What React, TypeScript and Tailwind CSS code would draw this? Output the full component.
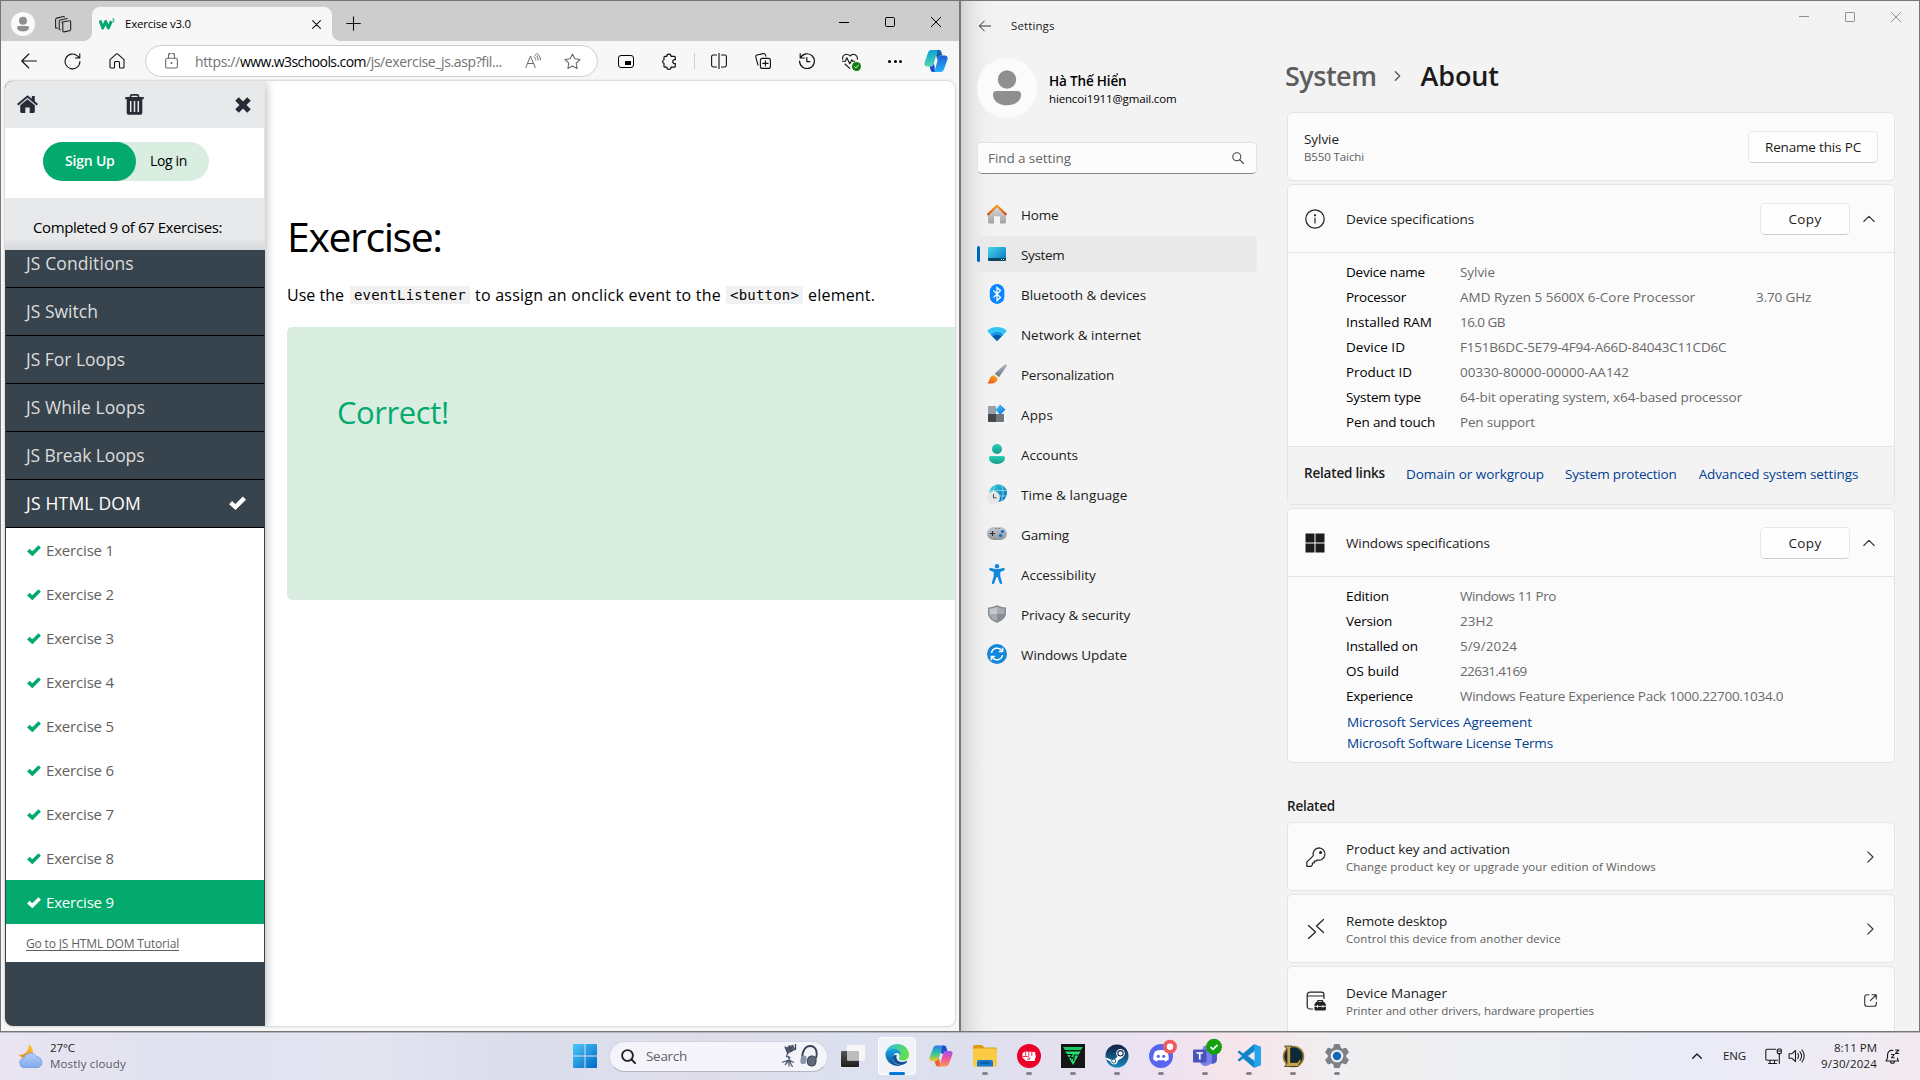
import type { ReactNode } from "react";

type IconProps = { className?: string; children: ReactNode; box?: number; sw?: number };

function Line({ className = "", children, box = 20, sw = 1.2 }: IconProps) {
  return (
    <svg
      viewBox={`0 0 ${box} ${box}`}
      className={`shrink-0 ${className}`}
      fill="none"
      stroke="currentColor"
      strokeWidth={sw}
      strokeLinecap="round"
      strokeLinejoin="round"
    >
      {children}
    </svg>
  );
}

function Grad({ id, from, to, x2 = 0, y2 = 1 }: { id: string; from: string; to: string; x2?: number; y2?: number }) {
  return (
    <linearGradient id={id} x1="0" y1="0" x2={x2} y2={y2}>
      <stop offset="0" stopColor={from} />
      <stop offset="1" stopColor={to} />
    </linearGradient>
  );
}

function Check({ className = "" }: { className?: string }) {
  return (
    <svg viewBox="0 0 14 11" className={`shrink-0 ${className}`} fill="none" stroke="currentColor" strokeWidth="3.6">
      <path d="M1.3 5.2 L5.3 8.800 L12.700 1.500" />
    </svg>
  );
}

/* ---------- Browser window ---------- */

function TabStrip() {
  return (
    <div className="flex h-[40px] items-end bg-[#cdcdcd] pl-[10px]">
      <div className="mb-[5px] h-6 w-6 shrink-0">
        <svg viewBox="0 0 24 24" className="h-6 w-6">
          <circle cx="12" cy="12" r="12" fill="#fafafa" />
          <circle cx="12" cy="8.8" r="4" fill="#8f8f8f" />
          <path d="M6 15.5q0-1.6 1.6-1.6h8.8q1.6 0 1.6 1.6c0 2.6-2.8 3.9-6 3.9s-6-1.300-6-3.900z" fill="#8f8f8f" />
        </svg>
      </div>
      <Line className="mb-[8px] ml-[19px] h-[18px] w-[18px] text-[#222]" box={18} sw={1.1}>
        <path d="M8 7l7.500-1.300a1 1 0 0 1 1.200 1v7.600a1.400 1.400 0 0 1-1.100 1.400l-5.600 1.200a1 1 0 0 1-1.200-1V8.300A1.400 1.400 0 0 1 8 7z" />
        <path d="M6.300 14.800a1 1 0 0 1-1.100-1V6.300A1.400 1.400 0 0 1 6.300 5l6.900-1.500M3.300 13a1 1 0 0 1-1.700-.8V4.500a1.600 1.600 0 0 1 1.200-1.400L9.500 1.500a1 1 0 0 1 1 .5" />
      </Line>
      <div className="relative ml-[20px] flex h-[34px] w-[240px] items-center rounded-t-lg bg-[#f7f7f7] pl-[7px]">
        <div className="absolute -left-2 bottom-0 h-2 w-2 bg-[radial-gradient(circle_at_0_0,#cdcdcd_7.5px,#f7f7f7_8px)]" />
        <div className="absolute -right-2 bottom-0 h-2 w-2 bg-[radial-gradient(circle_at_100%_0,#cdcdcd_7.500px,#f7f7f7_8px)]" />
        <svg viewBox="0 0 16 12" className="h-3 w-4 shrink-0" fill="none" stroke="#04aa6d">
          <path d="M1 2.500L3.800 10 6.600 3.500 9.400 10 12.300 3.200" strokeWidth="3" strokeLinejoin="round" />
          <path d="M13.300 1h1.800l-.9 1.300c1.300 0 1.300 2-.9 1.600" strokeWidth=".9" />
        </svg>
        <span className="ml-[10px] text-[11.5px] tracking-[-0.22px] text-black">Exercise v3.0</span>
        <Line className="ml-auto mr-[11px] h-[9px] w-[9px] text-[#111]" box={9} sw={1.1}>
          <path d="M.6.6l7.800 7.800M8.400.6L.6 8.400" />
        </Line>
      </div>
      <Line className="mb-[10px] ml-[14px] h-[15px] w-[15px] text-[#111]" box={15} sw={1.1}>
        <path d="M7.500.7v13.600M.7 7.500h13.600" />
      </Line>
      <div className="mb-[14px] ml-auto mr-[18px] flex items-center gap-[36px] text-black">
        <Line className="h-[10px] w-[10px]" box={10} sw={1}>
          <path d="M0 5.500h10" />
        </Line>
        <Line className="h-[10px] w-[10px]" box={10} sw={1}>
          <rect x=".5" y=".5" width="9" height="9" rx="1" />
        </Line>
        <Line className="h-[10px] w-[10px]" box={10} sw={1}>
          <path d="M.3.3l9.400 9.400M9.700.3L.3 9.700" />
        </Line>
      </div>
    </div>
  );
}

function CopilotEdge() {
  return (
    <svg viewBox="0 0 24 24" className="h-6 w-6 shrink-0">
      <defs>
        <Grad id="ce1" from="#0fa0d8" to="#4fd6b0" x2={0} />
        <Grad id="ce2" from="#1f5bd8" to="#23b3f5" x2={0} />
      </defs>
      <path d="M13.500 1h-6C5.500 1 4.500 2 3.900 4L.6 13.500c-.8 2.300.6 4 2.500 4h3.400c1.900 0 2.800-1 3.400-3L12.500 5c.6-1.900 1.300-2.700 3-2.700h1.800C16.800 1.400 15.900 1 13.500 1z" fill="url(#ce1)" />
      <path d="M10.500 23h6c2 0 3-1 3.600-3l3.300-9.500c.8-2.300-.6-4-2.500-4h-3.400c-1.900 0-2.800 1-3.400 3L11.500 19c-.6 1.900-1.300 2.700-3 2.700H6.700c.5.9 1.400 1.300 3.800 1.300z" fill="url(#ce2)" />
      <path d="M13.500 1c2.700 0 3.500.8 4 2.500l.9 3h-.9c-1.900 0-2.800 1-3.400 3l-.6 1.500-1.400-4.500z" fill="#1565a8" />
      <path d="M10.500 23c-2.700 0-3.500-.8-4-2.500l-.9-3h.9c1.900 0 2.800-1 3.400-3l.8 4z" fill="#1b49d0" />
    </svg>
  );
}

function Toolbar() {
  return (
    <div className="flex h-[40px] items-center pl-[20px] text-[#111]">
      <Line className="h-4 w-4" box={16} sw={1.1}>
        <path d="M15.500 8H.8M7.800 1L.8 8l7 7" />
      </Line>
      <Line className="ml-[27px] h-[17px] w-[17px]" box={17} sw={1.1}>
        <path d="M15.900 8.500a7.400 7.400 0 1 1-2.300-5.400l2 1.900M15.800.8V5h-4.400" />
      </Line>
      <Line className="ml-[28px] h-[16px] w-[16px]" box={16} sw={1.1}>
        <path d="M1 6.600L7.200 1.200a1.200 1.200 0 0 1 1.600 0L15 6.600V14a1 1 0 0 1-1 1h-2.500a1 1 0 0 1-1-1v-4.500a1 1 0 0 0-1-1h-3a1 1 0 0 0-1 1V14a1 1 0 0 1-1 1H2a1 1 0 0 1-1-1z" />
      </Line>
      <div className="ml-[20px] flex h-8 w-[453px] shrink-0 items-center rounded-full border border-[#cfcfcf] bg-white pl-[19px] text-[#6b6b6b]">
        <Line className="h-4 w-[13px]" box={13} sw={1.1}>
          <rect x=".6" y="3.800" width="11.800" height="9.700" rx="1.600" />
          <path d="M3.500 3.600V1.500a3 3 0 0 1 6 0v2.100M3.500 1a3 3 0 0 1 6 0" />
          <circle cx="6.500" cy="8.600" r=".5" fill="currentColor" />
        </Line>
        <div className="ml-[17px] flex whitespace-pre text-[14px] text-[#727272]">
          <span className="tracking-[-0.36px]">https://</span>
          <span className="tracking-[-0.58px] text-black">www.w3schools.com</span>
          <span className="tracking-[-0.38px]">/js/exercise_js.asp?fil...</span>
        </div>
        <Line className="ml-[23px] h-4 w-4" box={16} sw={1}>
          <path d="M.8 14.500L5.500 3l4.700 11.500M2.500 10.500h6M9 3.800c1.200.8 1.700 1.900 1.800 3.200M10 1.600c2 1.200 3 3 3.100 5.400M11.300-.2c2.600 1.700 4.200 4.200 4.200 7.200" />
        </Line>
        <Line className="ml-[23px] h-[17px] w-[17px]" box={17} sw={1.1}>
          <path d="M8.500 1l2.300 4.800 5.200.7-3.800 3.700.9 5.300-4.600-2.500-4.600 2.500.9-5.300L1 6.500l5.200-.7z" />
        </Line>
      </div>
      <div className="ml-[20px] flex h-[13px] w-4 shrink-0 items-end justify-end rounded-[3px] border-[1.5px] border-black p-[2px]">
        <div className="h-[4px] w-[6px] bg-black" />
      </div>
      <Line className="ml-[27px] h-[17px] w-[17px]" box={17} sw={1.2}>
        <path d="M5.800 3.300a2.100 2.100 0 0 1 4.200 0h3.300a1 1 0 0 1 1 1v2.400a2 2 0 1 0 0 3.800v2.700a1 1 0 0 1-1 1H10a2.100 2.100 0 0 1-4.200 0H4a1 1 0 0 1-1-1v-2.700a2 2 0 0 1 0-3.800V4.300a1 1 0 0 1 1-1z" />
      </Line>
      <div className="ml-[16px] h-4 w-px shrink-0 bg-[#cfcfcf]" />
      <Line className="ml-[16px] h-4 w-4" box={16} sw={1.1}>
        <path d="M8 0v16M5.500 2H2.200A1.700 1.700 0 0 0 .6 3.700v8.600A1.700 1.700 0 0 0 2.200 14h3.300M10.500 2h3.300a1.700 1.700 0 0 1 1.600 1.700v8.600a1.700 1.700 0 0 1-1.600 1.700h-3.300" />
      </Line>
      <Line className="ml-[28px] h-4 w-4" box={16} sw={1.1}>
        <rect x="5.400" y="5.400" width="10" height="10" rx="2" />
        <path d="M10.400 7.800v5.200M7.800 10.400H13M3 12L.8 4.200A1.900 1.900 0 0 1 2 2L8.200.6c1.100-.2 2 .4 2.300 1.500l.3 1.100" />
      </Line>
      <Line className="ml-[28px] h-4 w-4" box={16} sw={1.2}>
        <path d="M1.400 4.800A7.400 7.400 0 1 1 .6 8M1.200.8v4.200h4.200M7.800 4.500v4.200h3" />
      </Line>
      <div className="relative ml-[27px] h-4 w-[19px] shrink-0">
        <Line className="h-4 w-4" box={16} sw={1.100}>
          <path d="M.7 6.200C0 2.600 4-.5 7.800 2.700l.2.300C11.500-.7 16 2 15.300 6.300M.3 8.300h3l1.500-3.500 3 6 2-4 .8 1.500h2M3 11l4.700 4.300" />
        </Line>
        <div className="absolute -bottom-[2px] right-0 flex h-[9px] w-[9px] items-center justify-center rounded-full bg-[#107c10]">
          <Line className="h-[5px] w-[5px] text-white" box={5} sw={0.9}>
            <path d="M.6 2.700l1.300 1.300L4.400 1" />
          </Line>
        </div>
      </div>
      <div className="ml-[27px] flex shrink-0 gap-[2.500px]">
        <i className="h-[3px] w-[3px] rounded-full bg-black" />
        <i className="h-[3px] w-[3px] rounded-full bg-black" />
        <i className="h-[3px] w-[3px] rounded-full bg-black" />
      </div>
      <div className="ml-[22px]">
        <CopilotEdge />
      </div>
    </div>
  );
}

const topics = [
  { label: "JS Conditions", c: "tracking-[0.1px]" },
  { label: "JS Switch", c: "tracking-[0.02px]" },
  { label: "JS For Loops", c: "tracking-[-0.02px]" },
  { label: "JS While Loops", c: "tracking-[0.07px]" },
  { label: "JS Break Loops", c: "tracking-[-0.1px]" },
];

const exercises = [1, 2, 3, 4, 5, 6, 7, 8, 9];

function Sidebar() {
  return (
    <aside className="z-10 flex w-[260px] shrink-0 flex-col bg-[#38444d] shadow-[0_2px_10px_rgba(0,0,0,0.35)]">
      <div className="flex h-[47px] shrink-0 items-center bg-[#e7e9eb] pl-3 text-[#282a35]">
        <svg viewBox="0 0 21 18" className="mb-px h-[18px] w-[21px]" fill="currentColor">
          <path d="M10.500.3l4.300 3.500V1h3v5.300L21 9l-1.300 1.400-9.200-7.600-9.200 7.600L0 9z" />
          <path d="M10.500 4.300l7.300 6v6.400c0 .7-.5 1.200-1.200 1.200h-3.900v-5.400H8.300v5.400H4.400c-.7 0-1.200-.5-1.200-1.200v-6.400z" />
        </svg>
        <svg viewBox="0 0 19 21" className="mb-px ml-[87px] h-[21px] w-[19px]">
          <path d="M5.500 3.500V2.300A1.500 1.500 0 0 1 7 .9h5a1.500 1.500 0 0 1 1.500 1.400v1.200" fill="none" stroke="#282a35" strokeWidth="1.700" />
          <path d="M.3 3h18.400v2.300h-1.400v13.200c0 1.500-.8 2.300-2.200 2.300H3.900c-1.400 0-2.200-.8-2.200-2.300V5.300H.3z" fill="#282a35" />
          <path d="M5.700 7v11M9.500 7v11M13.300 7v11" stroke="#e7e9eb" strokeWidth="1.500" />
        </svg>
        <svg viewBox="0 0 16 16" className="ml-[91px] h-4 w-4" stroke="currentColor" strokeWidth="5">
          <path d="M2 2l12 12M14 2L2 14" />
        </svg>
      </div>
      <div className="h-[70px] shrink-0 border-r border-[#e2e3e5] bg-white pl-[38px] pt-[14px]">
        <div className="flex h-[39px] w-[166px] rounded-full bg-[#d9eee1] text-[15px] leading-[38px]">
          <span className="w-[93px] rounded-full bg-[#04aa6d] pl-[22px] text-[14px] font-semibold tracking-[-0.200px] text-white">Sign Up</span>
          <span className="pl-[14px] text-[14px] tracking-[-0.360px] text-black">Log in</span>
        </div>
      </div>
      <div className="h-[52px] shrink-0 bg-[linear-gradient(#e7e9eb_40px,#d5d8db)] pl-[28px] text-[15px] leading-[58px] tracking-[-0.410px] text-black">
        Completed 9 of 67 Exercises:
      </div>
      <div className="shrink-0 overflow-hidden border-x border-[#38444d] bg-white">
        <ul className="-mt-[10px] bg-[#38444d]">
          {topics.map((t) => (
            <li key={t.label} className={`h-12 border-b border-black pl-5 text-[17.5px] leading-[47px] text-[#dcdcdc] ${t.c}`}>
              {t.label}
            </li>
          ))}
          <li className="flex h-12 border-b border-black pl-5 text-[17.500px] leading-[47px] tracking-[0.200px] text-white">
            JS HTML DOM
            <Check className="ml-auto mr-[18px] mt-[16px] h-[14px] w-[17px]" />
          </li>
        </ul>
        {exercises.map((n) => (
          <div
            key={n}
            className={`flex h-[44px] items-center pl-[21px] text-[15px] tracking-[-0.180px] ${
              n === 9 ? "bg-[#04aa6d] text-white" : "text-[#5f5f5f]"
            }`}
          >
            <Check className={`h-[11px] w-[14px] ${n === 9 ? "text-white" : "text-[#04aa6d]"}`} />
            <span className="ml-[5px]">Exercise {n}</span>
          </div>
        ))}
        <div className="h-[38px] pl-5 text-[12px] leading-[39px] tracking-[-0.160px] text-[#5f5f5f] underline underline-offset-2">
          Go to JS HTML DOM Tutorial
        </div>
      </div>
    </aside>
  );
}

function Browser() {
  return (
    <section className="flex w-[960px] shrink-0 flex-col border border-[#767676] bg-[#f7f7f7]">
      <TabStrip />
      <Toolbar />
      <div className="mx-1 flex h-[945px] overflow-hidden rounded-lg bg-white shadow-[0_0_2px_1px_rgba(0,0,0,0.14)]">
        <Sidebar />
        <main className="flex flex-1 flex-col pl-[22px]">
          <h1 className="mt-[127px] text-[41px] leading-[56px] tracking-[-1.400px] text-black">Exercise:</h1>
          <p className="mt-[19px] flex h-[24px] items-center text-[16px] leading-6 text-black">
            <span>Use the</span>
            <code className="ml-[6px] h-[18px] w-[120px] bg-[#f1f1f1] pl-1 font-['DejaVu_Sans_Mono'] text-[14px] leading-[18px] tracking-[0.190px]">eventListener</code>
            <span className="ml-[5px] tracking-[0.240px]">to assign an onclick event to the</span>
            <code className="ml-[5px] h-[18px] w-[77px] bg-[#f1f1f1] pl-1 font-['DejaVu_Sans_Mono'] text-[14px] leading-[18px] tracking-[0.200px]">&lt;button&gt;</code>
            <span className="ml-[5px] tracking-[0.190px]">element.</span>
          </p>
          <div className="mt-[20px] h-[273px] rounded-l-[5px] bg-[#d9eee1] pl-[50px] pt-[62px] text-[31px] leading-[46px] tracking-[-0.420px] text-[#04aa6d]">
            Correct!
          </div>
        </main>
      </div>
    </section>
  );
}

/* ---------- Settings window ---------- */

const icon = "h-5 w-5 shrink-0";

const nav = [
  {
    label: "Home",
    c: "tracking-[-0.160px]",
    i: (
      <svg viewBox="0 0 20 20" className={icon}>
        <defs>
          <Grad id="h1" from="#dcdcdc" to="#a2a2a2" />
          <Grad id="h2" from="#f7a41d" to="#d8490c" />
        </defs>
        <path d="M10 2l9 8.500V18a1.500 1.500 0 0 1-1.500 1.500H13V13a.7.7 0 0 0-.7-.7H7.700A.7.7 0 0 0 7 13v6.500H2.500A1.500 1.500 0 0 1 1 18v-7.500z" fill="url(#h1)" />
        <path d="M1.200 10.300L10 1.700l8.800 8.600" fill="none" stroke="url(#h2)" strokeWidth="2.200" strokeLinecap="round" strokeLinejoin="round" />
      </svg>
    ),
  },
  {
    label: "System",
    c: "tracking-[-0.330px]",
    i: (
      <svg viewBox="0 0 20 20" className={icon}>
        <defs><Grad id="s1" from="#3fd8e8" to="#0f72c4" x2={1} /></defs>
        <rect x="1" y="3" width="18" height="14" rx="1.400" fill="url(#s1)" />
        <path d="M1 14h18v1.600a1.400 1.400 0 0 1-1.400 1.400H2.400A1.400 1.400 0 0 1 1 15.600z" fill="#0b4660" />
        <path d="M14 15.500h1M16 15.500h1" stroke="#9fe" strokeWidth="1" />
      </svg>
    ),
  },
  {
    label: "Bluetooth & devices",
    c: "tracking-[-0.020px]",
    i: (
      <svg viewBox="0 0 20 20" className={icon}>
        <rect x="2.800" width="14.600" height="20" rx="7.300" fill="#0a84ff" />
        <path d="M6.500 6.500l7 7L10 16.500v-13l3.500 3-7 7" fill="none" stroke="#fff" strokeWidth="1.300" />
      </svg>
    ),
  },
  {
    label: "Network & internet",
    c: "tracking-[-0.050px]",
    i: (
      <svg viewBox="0 0 20 20" className={icon}>
        <path d="M10 17L.6 7.600c-.4-.5-.4-1 .1-1.400 5.400-4.300 13.200-4.300 18.600 0 .5.400.5.900.1 1.400z" fill="#35c5f4" />
        <path d="M10 17L3.700 10.700c3.400-3.700 9.200-3.700 12.600 0z" fill="#1593e0" />
        <path d="M10 17l-4.400-4.400c2.300-2 6.500-2 8.800 0z" fill="#0b57a8" />
      </svg>
    ),
  },
  {
    label: "Personalization",
    c: "tracking-[-0.260px]",
    i: (
      <svg viewBox="0 0 20 20" className={icon}>
        <defs>
          <Grad id="p1" from="#b3bcc4" to="#68737d" />
          <linearGradient id="p2" x1="1" y1="0" x2="0" y2="1">
            <stop offset="0" stopColor="#fcb321" />
            <stop offset="1" stopColor="#ea4a1a" />
          </linearGradient>
        </defs>
        <path d="M19.600.500c.6.600.3 1.300-.1 2l-7.600 10.700-4.200-3.600L17.300.800c.8-.700 1.700-.900 2.300-.300z" fill="url(#p1)" />
        <path d="M7.300 11.200l3.200 3c.2 2.700-2 5-5.900 5.400-2 .100-3.600-.200-4.500-.7 1.800-.7 2-2 2.600-4.200.6-2 2.500-3.300 4.600-3.500z" fill="url(#p2)" />
      </svg>
    ),
  },
  {
    label: "Apps",
    c: "tracking-[0.130px]",
    i: (
      <svg viewBox="0 0 20 20" className={icon}>
        <defs><Grad id="a1" from="#45c8f5" to="#0a70d8" x2={1} /></defs>
        <path d="M1 3a1 1 0 0 1 1-1h7v8H1z" fill="#9aa0a7" />
        <path d="M1 10h8v8H2a1 1 0 0 1-1-1z" fill="#44484d" />
        <path d="M9 10h8v7a1 1 0 0 1-1 1H9z" fill="#72777d" />
        <path d="M13.200.500l5.200 5.200-5.200 5.200L8.500 5.700z" fill="url(#a1)" />
      </svg>
    ),
  },
  {
    label: "Accounts",
    c: "tracking-[-0.050px]",
    i: (
      <svg viewBox="0 0 20 20" className={icon}>
        <defs><Grad id="ac" from="#2bcfb8" to="#129c86" /></defs>
        <circle cx="10" cy="5" r="5" fill="url(#ac)" />
        <path d="M2 13.800c0-1 .7-1.800 1.800-1.800h12.400c1.100 0 1.800.8 1.800 1.800 0 4-3.500 6.200-8 6.200s-8-2.200-8-6.200z" fill="url(#ac)" />
      </svg>
    ),
  },
  {
    label: "Time & language",
    c: "tracking-[0.100px]",
    i: (
      <svg viewBox="0 0 20 20" className={icon}>
        <defs><Grad id="t1" from="#35d3dd" to="#0b62b8" x2={1} /></defs>
        <circle cx="11.200" cy="9" r="8.800" fill="url(#t1)" />
        <path d="M3 6.500h16.500M3 12h16.500M8 1c-2 5-2 11 0 16M14.500 1c2 5 2 11 0 16" fill="none" stroke="#8fe6ee" strokeWidth=".8" />
        <circle cx="6.500" cy="13.500" r="6.400" fill="#e6e6e6" />
        <path d="M6.500 10v3.700h3" fill="none" stroke="#555" strokeWidth="1.100" />
      </svg>
    ),
  },
  {
    label: "Gaming",
    c: "tracking-[-0.140px]",
    i: (
      <svg viewBox="0 0 20 20" className={icon}>
        <defs><Grad id="g1" from="#c2c9cf" to="#8d959c" /></defs>
        <rect y="3" width="20" height="13" rx="6.500" fill="url(#g1)" />
        <path d="M5.500 7v5M3 9.500h5" stroke="#333" strokeWidth="1.200" />
        <path d="M8.500 4.500h1M11.500 4.500h1" stroke="#444" />
        <circle cx="15.500" cy="7.500" r="1.600" fill="#0f6cc9" />
        <circle cx="13.500" cy="11.500" r="1.600" fill="#0f6cc9" />
      </svg>
    ),
  },
  {
    label: "Accessibility",
    c: "tracking-[-0.050px]",
    i: (
      <svg viewBox="0 0 20 20" className={icon} fill="#1088dd">
        <circle cx="10" cy="2.200" r="2.200" />
        <path d="M2.200 4.800c.3-.8 1-1 1.800-.7 4 1.500 8 1.500 12 0 .8-.3 1.500 0 1.800.7.200.8-.1 1.300-.8 1.600l-3.700 1.500v4.300l1.800 6.200c.3.900-.1 1.500-.8 1.600-.8.200-1.300-.2-1.600-.9L10.500 13h-1l-2.200 6.100c-.3.700-.8 1.100-1.600.9-.7-.1-1.100-.7-.8-1.600l1.800-6.200V7.900L3 6.400c-.7-.3-1-.8-.8-1.600z" />
      </svg>
    ),
  },
  {
    label: "Privacy & security",
    c: "tracking-[-0.080px]",
    i: (
      <svg viewBox="0 0 20 20" className={icon}>
        <path d="M10 1c2.500 1.600 5.500 2.400 9 2.500V9c0 4.500-3.500 7.700-9 10-5.500-2.300-9-5.500-9-10V3.500C4.500 3.400 7.500 2.600 10 1z" fill="#858c93" />
        <path d="M10 2.800v7.200H2.500V4.800c3-.2 5.300-.8 7.500-2z" fill="#c3c8cd" />
        <path d="M10 2.800v7.200h7.500V4.800c-3-.2-5.300-.8-7.500-2zM10 10v7.300C5.500 15.300 2.500 13 2.500 10z" fill="#a5abb1" />
      </svg>
    ),
  },
  {
    label: "Windows Update",
    c: "tracking-[-0.090px]",
    i: (
      <svg viewBox="0 0 20 20" className={icon}>
        <circle cx="10" cy="10" r="10" fill="#1387dc" />
        <g fill="none" stroke="#fff" strokeWidth="1.500">
          <path d="M4.500 9a5.700 5.700 0 0 1 10.400-2.200M15.500 11a5.700 5.700 0 0 1-10.400 2.200" />
          <path d="M15.600 3.800v3.700h-3.700M4.400 16.200v-3.700h3.700" />
        </g>
      </svg>
    ),
  },
];

function SettingsNav() {
  return (
    <div className="w-[326px] shrink-0 pl-[16px]">
      <div className="mt-[15px] flex h-5 items-center pl-[2px] text-[#333]">
        <Line className="h-[12px] w-[12px]" box={12} sw={1}>
          <path d="M11.700 6H.5M5.300 1L.4 6l4.900 5" />
        </Line>
        <span className="ml-[20px] text-[11.5px] tracking-[0.110px] text-[#1b1b1b]">Settings</span>
      </div>
      <div className="mt-[22px] flex h-[60px] items-center">
        <svg viewBox="0 0 60 60" className="h-[60px] w-[60px]">
          <circle cx="30" cy="30" r="30" fill="#fbfbfb" />
          <circle cx="30" cy="21.500" r="9.200" fill="#8f8f8f" />
          <path d="M16 36.500q0-3.500 3.500-3.500h21q3.500 0 3.500 3.500c0 7.500-7 10.800-14 10.800S16 44 16 36.500z" fill="#8f8f8f" />
        </svg>
        <div className="ml-[12px] pt-[2px] text-black">
          <div className="h-[18px] text-[13.5px] font-semibold leading-[18px] tracking-[-0.160px]">Hà Thế Hiển</div>
          <div className="h-[17px] text-[11.5px] leading-[17px] tracking-[-0.150px]">hiencoi1911@gmail.com</div>
        </div>
      </div>
      <div className="mt-[24px] flex h-8 w-[280px] items-center rounded-[5px] border border-b-[#868686] border-[#e2e2e2] bg-[#fcfcfc] pl-[10px] text-[13.5px] tracking-[-0.080px] text-[#666]">
        Find a setting
        <Line className="ml-auto mr-[12px] h-[12px] w-[12px] text-[#444]" box={12} sw={1.1}>
          <circle cx="4.800" cy="4.800" r="4" />
          <path d="M7.800 7.800l3.700 3.700" />
        </Line>
      </div>
      <nav className="mt-[22px] flex flex-col gap-1">
        {nav.map((n) => (
          <div key={n.label} className={`relative flex h-9 w-[280px] items-center rounded-[5px] pl-[10px] ${n.label === "System" ? "bg-[#e9e9e9]" : ""}`}>
            {n.label === "System" && <div className="absolute left-0 top-[10px] h-4 w-[3px] rounded-full bg-[#0067c0]" />}
            {n.i}
            <span className={`ml-[14px] pt-[2px] text-[13.5px] text-[#1b1b1b] ${n.c}`}>{n.label}</span>
          </div>
        ))}
      </nav>
    </div>
  );
}

function Button({ className, children }: { className: string; children: ReactNode }) {
  return (
    <div className={`flex h-8 items-center justify-center rounded-[5px] border border-b-[#cccccc] border-[#e8e8e8] bg-[#fefefe] text-[13.5px] text-[#1b1b1b] ${className}`}>
      {children}
    </div>
  );
}

type Spec = { k: string; kc: string; v: string; vc: string; extra?: string };

const device: Spec[] = [
  { k: "Device name", kc: "tracking-[-0.180px]", v: "Sylvie", vc: "tracking-[-0.050px]" },
  { k: "Processor", kc: "tracking-[-0.260px]", v: "AMD Ryzen 5 5600X 6-Core Processor", vc: "tracking-[-0.020px]", extra: "3.70 GHz" },
  { k: "Installed RAM", kc: "", v: "16.0 GB", vc: "tracking-[-0.540px]" },
  { k: "Device ID", kc: "tracking-[0.040px]", v: "F151B6DC-5E79-4F94-A66D-84043C11CD6C", vc: "tracking-[-0.210px]" },
  { k: "Product ID", kc: "tracking-[-0.070px]", v: "00330-80000-00000-AA142", vc: "" },
  { k: "System type", kc: "tracking-[-0.130px]", v: "64-bit operating system, x64-based processor", vc: "tracking-[-0.100px]" },
  { k: "Pen and touch", kc: "tracking-[-0.150px]", v: "Pen support", vc: "tracking-[-0.200px]" },
];

const windowsSpecs: Spec[] = [
  { k: "Edition", kc: "tracking-[-0.110px]", v: "Windows 11 Pro", vc: "tracking-[-0.400px]" },
  { k: "Version", kc: "tracking-[-0.200px]", v: "23H2", vc: "" },
  { k: "Installed on", kc: "tracking-[-0.110px]", v: "5/9/2024", vc: "tracking-[0.100px]" },
  { k: "OS build", kc: "", v: "22631.4169", vc: "tracking-[-0.650px]" },
  { k: "Experience", kc: "tracking-[-0.230px]", v: "Windows Feature Experience Pack 1000.22700.1034.0", vc: "tracking-[-0.280px]" },
];

function Specs({ rows }: { rows: Spec[] }) {
  return (
    <dl>
      {rows.map((r) => (
        <div key={r.k} className="flex h-[25px] items-center pl-[58px] text-[13.5px] text-[#6a6a6a]">
          <dt className={`w-[114px] text-black ${r.kc}`}>{r.k}</dt>
          <dd className={r.vc}>{r.v}</dd>
          {r.extra && <dd className="ml-[61px] tracking-[-0.160px]">{r.extra}</dd>}
        </div>
      ))}
    </dl>
  );
}

function CardHeader({ i, children }: { i: ReactNode; children: ReactNode }) {
  return (
    <div className="flex h-[68px] items-center border-b border-[#e5e5e5] pl-[17px]">
      {i}
      <span className="ml-[21px] pt-px text-[13.5px] tracking-[-0.100px] text-[#1b1b1b]">{children}</span>
      <Button className="ml-auto w-[90px] pt-px tracking-[0.340px]">Copy</Button>
      <Line className="ml-[13px] mr-[19px] h-[12px] w-[12px] text-[#333]" box={12} sw={1.1}>
        <path d="M.8 8.500L6 3.300l5.200 5.200" />
      </Line>
    </div>
  );
}

const related = [
  {
    t: "Product key and activation",
    tc: "tracking-[-0.100px]",
    s: "Change product key or upgrade your edition of Windows",
    sc: "tracking-[0.130px]",
    i: (
      <>
        <path d="M13 .8a6.200 6.200 0 1 1-1.800 12.200L10 14.200H8.200V16H6.400v1.800L4.900 19.300H.8v-4.100l6.500-6.500A6.200 6.200 0 0 1 13 .8z" />
        <circle cx="14.600" cy="5.400" r=".9" fill="currentColor" />
      </>
    ),
  },
  {
    t: "Remote desktop",
    tc: "tracking-[-0.140px]",
    s: "Control this device from another device",
    sc: "tracking-[0.090px]",
    i: <path d="M2.500 6.500l7 6.500-7 6.500M17.500.5l-7 6.500 7 6.500" />,
  },
  {
    t: "Device Manager",
    tc: "",
    s: "Printer and other drivers, hardware properties",
    sc: "tracking-[-0.020px]",
    i: (
      <>
        <path d="M6.500 18H4a2.800 2.800 0 0 1-2.800-2.800V4A2.800 2.800 0 0 1 4 1.200h11.200A2.800 2.800 0 0 1 18 4v3.500M1.200 5H18" />
        <path d="M9 13.300h10.300V18a1 1 0 0 1-1 1H10a1 1 0 0 1-1-1zM9.500 13l1-1.700h7.300l1 1.700" fill="currentColor" />
        <path d="M11.800 11V9.500h4.700V11" />
        <path d="M8.500 15.300H20M11.500 14.500v1.800M17 14.500v1.800" stroke="#fbfbfb" strokeWidth=".9" />
      </>
    ),
  },
];

const card = "rounded-[5px] border border-[#e5e5e5] bg-[#fbfbfb]";

function About() {
  return (
    <div className="w-[608px]">
      <div className="mt-[45px] flex h-[60px] items-center text-[27px] font-semibold leading-[60px]">
        <span className="-ml-[2px] tracking-[-0.500px] text-[#5d5d5d]">System</span>
        <Line className="ml-[18px] h-[14px] w-[8px] text-[#5d5d5d]" box={12} sw={2.2}>
          <path d="M2-.5L8.500 6 2 12.500" />
        </Line>
        <span className="ml-[18px] tracking-[-0.100px] text-[#1b1b1b]">About</span>
      </div>
      <div className={`mt-[6px] flex h-[69px] items-center pl-4 pr-4 ${card}`}>
        <div className="pt-[2px]">
          <div className="h-[18px] text-[13.5px] leading-[18px] tracking-[-0.050px] text-[#1b1b1b]">Sylvie</div>
          <div className="h-[17px] text-[11.5px] leading-[17px] tracking-[-0.110px] text-[#5d5d5d]">B550 Taichi</div>
        </div>
        <Button className="ml-auto w-[130px] pt-px tracking-[-0.170px]">Rename this PC</Button>
      </div>
      <div className={`mt-[3px] h-[321px] overflow-hidden ${card}`}>
        <CardHeader
          i={
            <Line className="h-5 w-5 text-[#222]">
              <circle cx="10" cy="10" r="9.200" />
              <path d="M10 9v5" />
              <circle cx="10" cy="6.300" r=".5" fill="currentColor" />
            </Line>
          }
        >
          Device specifications
        </CardHeader>
        <div className="h-[194px] border-b border-[#e5e5e5] pt-[7px]">
          <Specs rows={device} />
        </div>
        <div className="flex h-[57px] items-center bg-[#f3f3f3] pb-[3px] pl-4 text-[13.5px] text-[#003e92]">
          <span className="mb-[1px] font-semibold tracking-[-0.190px] text-[#1b1b1b]">Related links</span>
          <span className="ml-[21px] tracking-[-0.050px]">Domain or workgroup</span>
          <span className="ml-[21px] tracking-[-0.160px]">System protection</span>
          <span className="ml-[22px] tracking-[-0.110px]">Advanced system settings</span>
        </div>
      </div>
      <div className={`mt-[3px] h-[255px] ${card}`}>
        <CardHeader
          i={
            <svg viewBox="0 0 20 20" className="h-5 w-5" fill="#1b1b1b">
              <path d="M.500.500h9v9h-9zM10.500.500h9v9h-9zM.500 10.500h9v9h-9zM10.500 10.500h9v9h-9z" />
            </svg>
          }
        >
          Windows specifications
        </CardHeader>
        <div className="pt-[7px]">
          <Specs rows={windowsSpecs} />
          <div className="ml-[59px] mt-[3px] text-[13.5px] leading-[21px] text-[#003e92]">
            <div className="tracking-[-0.090px]">Microsoft Services Agreement</div>
            <div className="tracking-[-0.200px]">Microsoft Software License Terms</div>
          </div>
        </div>
      </div>
      <h2 className="mt-[33px] h-[20px] text-[13.5px] font-semibold leading-[20px] tracking-[-0.220px] text-[#1b1b1b]">Related</h2>
      <div className="mt-[6px] flex flex-col gap-[3px]">
        {related.map((r) => (
          <div key={r.t} className={`flex h-[69px] shrink-0 items-center pl-[18px] ${card}`}>
            <Line className="h-5 w-5 text-[#222]">{r.i}</Line>
            <div className="ml-5 pt-[2px]">
              <div className="h-[18px] text-[13.5px] leading-[18px] text-[#1b1b1b]">
                <span className={r.tc}>{r.t}</span>
              </div>
              <div className="h-[17px] text-[11.5px] leading-[18px] text-[#5d5d5d]">
                <span className={r.sc}>{r.s}</span>
              </div>
            </div>
            {r.t === "Device Manager" ? (
              <Line className="ml-auto mr-[17px] h-[13px] w-[13px] text-[#333]" box={13} sw={1.1}>
                <path d="M5 .8H3A2.300 2.300 0 0 0 .7 3v7A2.300 2.300 0 0 0 3 12.300h7a2.300 2.300 0 0 0 2.300-2.300V8.200M8 .7h4.300V5M12 1L6.300 6.700" />
              </Line>
            ) : (
              <Line className="ml-auto mr-[18px] h-[12px] w-[12px] text-[#333]" box={12} sw={1.1}>
                <path d="M3.800.8L9 6l-5.200 5.200" />
              </Line>
            )}
          </div>
        ))}
      </div>
    </div>
  );
}

function Settings() {
  return (
    <section className="relative flex w-[960px] overflow-hidden border border-[#767676] bg-[linear-gradient(90deg,#d2d2d2,#e4e4e4_10px,#efefef_22px,#f3f3f3_36px)]">
      <SettingsNav />
      <About />
      <div className="absolute right-[18px] top-[11px] flex items-center gap-[36px] text-[#8f8f8f]">
        <Line className="h-[10px] w-[10px]" box={10} sw={1}>
          <path d="M0 4.500h10" />
        </Line>
        <Line className="h-[10px] w-[10px]" box={10} sw={1}>
          <rect x=".5" y=".5" width="9" height="9" rx=".6" />
        </Line>
        <Line className="h-[10px] w-[10px]" box={10} sw={1}>
          <path d="M.3.3l9.400 9.400M9.700.3L.3 9.700" />
        </Line>
      </div>
    </section>
  );
}

/* ---------- Taskbar ---------- */

function App24({ children, active, running = true }: { children: ReactNode; active?: boolean; running?: boolean }) {
  return (
    <div className="relative flex h-12 w-[44px] shrink-0 items-center justify-center">
      {active && <div className="absolute left-[3px] top-[5px] h-[38px] w-[38px] rounded-[4px] border border-white/80 bg-white/60" />}
      <svg viewBox="0 0 24 24" className="relative h-6 w-6 overflow-visible">
        {children}
      </svg>
      {running && <div className={`absolute bottom-[5px] h-[3px] rounded-full ${active ? "w-4 bg-[#0078d4]" : "w-[6px] bg-[#858589]"}`} />}
    </div>
  );
}

function Taskbar() {
  return (
    <footer className="flex h-12 items-center bg-[linear-gradient(90deg,#e9e4f1,#dfe2f0_200px,#e5e5f2_360px,#d9dcea_520px,#dedfec_640px,#dfdce9_700px,#dce1ef_850px,#dddfed_960px,#ece2f2_1150px,#f7e5ea_1240px,#efeef0_1340px,#edeff0_1500px,#e9ebf8_1680px,#efebf4_1850px,#f3e9ef_1920px)] shadow-[inset_0_1px_0_#b6b6ba]">
      <div className="flex w-[573px] shrink-0 items-center pl-[19px]">
        <svg viewBox="0 0 24 24" className="h-6 w-6">
          <defs>
            <Grad id="w1" from="#b5d0f8" to="#7ea8ec" />
            <linearGradient id="w2" x1="1" y1="0" x2="0" y2="1">
              <stop offset="0" stopColor="#f8cc30" />
              <stop offset="1" stopColor="#ee7d1a" />
            </linearGradient>
          </defs>
          <path d="M9.500.500c4 1.500 5.500 6.500 3.500 11-2.500 4-9.500 3.500-13-.5 5 .500 10.500-4 9.500-10.500z" fill="url(#w2)" />
          <path d="M5.500 24a5.200 5.200 0 0 1-.8-10.200 7 7 0 0 1 12.600-1.300A5.800 5.800 0 0 1 18.200 24z" fill="url(#w1)" stroke="#6c95dd" strokeWidth=".7" />
        </svg>
        <div className="ml-[7px] text-[11.5px] leading-4">
          <div className="tracking-[-0.080px] text-[#1b1b1b]">27°C</div>
          <div className="tracking-[0.180px] text-[#5b5b60]">Mostly cloudy</div>
        </div>
      </div>
      <svg viewBox="0 0 24 24" className="h-6 w-6 shrink-0">
        <defs><Grad id="win" from="#4cc9f8" to="#0067c8" x2={1} /></defs>
        <path d="M1 0h10.500v11.500H0V1a1 1 0 0 1 1-1zM12.500 0H23a1 1 0 0 1 1 1v10.500H12.500zM0 12.500h11.500V24H1a1 1 0 0 1-1-1zM12.500 12.500H24V23a1 1 0 0 1-1 1H12.500z" fill="url(#win)" />
      </svg>
      <div className="ml-[12px] flex h-[31px] w-[219px] shrink-0 items-center rounded-full border border-b-[#b3b6c4] border-[#d3d5e0] bg-[#f4f4fa] pl-[11px]">
        <Line className="h-[15px] w-[15px] text-[#222]" box={15} sw={1.9}>
          <circle cx="6.500" cy="6.500" r="5.400" />
          <path d="M10.500 10.500l3.600 3.600" />
        </Line>
        <span className="ml-[10px] text-[13.5px] tracking-[-0.290px] text-[#606066]">Search</span>
        <svg viewBox="0 0 38 24" className="ml-auto mr-[8px] h-6 w-[38px]" fill="none">
          <path d="M4.500 3.500L12 .8l2.500 5L6.500 10z" fill="#525a6c" />
          <path d="M4 2.500l2.800 7M8 1.200l2.300 6.300M14.500 0v6" stroke="#3f4658" strokeWidth="1.300" />
          <path d="M6.500 9.500l-1 3 4 1.500M8 12v10.500M1 18.500l7-2.500 5 2.500M8 16l-4 5M8 16l3.500 7" stroke="#555d70" strokeWidth="1.300" />
          <path d="M21.500 15C20.500 8 24 1.800 29.500 2c5 .2 7.500 5.500 5.500 12" stroke="#3d4456" strokeWidth="1.900" />
          <rect x="19.500" y="11.500" width="6" height="8.500" rx="2.700" fill="#8d96aa" transform="rotate(8 22 16)" />
          <rect x="26.500" y="12" width="8.500" height="10" rx="4" fill="#5e677d" stroke="#3b4254" transform="rotate(10 31 17)" />
        </svg>
      </div>
      <div className="ml-[3px] flex">
        <App24 running={false}>
          <defs>
            <Grad id="tv" from="#555" to="#1c1c1c" />
          </defs>
          <rect y="7" width="18" height="16" rx="1" fill="url(#tv)" />
          <rect x="6" y="1" width="18" height="15.500" rx="1" fill="#f6f6f6" />
          <path d="M6 7h12v9.500H7a1 1 0 0 1-1-1z" fill="#bdbdbd" />
        </App24>
        <App24 active>
          <defs>
            <Grad id="e1" from="#28b8ee" to="#62e04f" x2={1} y2={0.3} />
            <Grad id="e2" from="#1aa7e8" to="#0a4c94" />
          </defs>
          <path d="M.5 9C2 3.500 6.500 0 12 0c7 0 12 5 12 10.500 0 4-3 6-6 6s-4.500-1-4-2c1.500-3-.500-7-5-7C5.500 7.500 2 7 .5 9z" fill="url(#e1)" />
          <path d="M.5 9C2 6.500 5 4.800 8.500 4.800c5 0 7.500 3.500 6.800 6.200-2-3.500-7.300-2-7.300 3 0 4.500 4 8 9 7A12 12 0 0 1 .5 9z" fill="url(#e2)" />
          <path d="M8 13c-.5 5.500 5 9.500 11 7.300 1.200-.5 2.500-1.300 3-2.300.3-.8-.3-1.200-1-.8-3 1.500-8.500 1-9.500-3-.2-1-.1-2 .3-2.900C9.500 10.500 8 11.200 8 13z" fill="#104e96" />
        </App24>
        <App24 running={false}>
          <defs>
            <linearGradient id="c1" x1="0" y1="0" x2="0" y2="1">
              <stop offset="0" stopColor="#2a7bea" />
              <stop offset=".5" stopColor="#2ec4a0" />
              <stop offset="1" stopColor="#f0c722" />
            </linearGradient>
            <linearGradient id="c2" x1="0" y1="0" x2="0" y2="1">
              <stop offset="0" stopColor="#a052ee" />
              <stop offset=".5" stopColor="#f0559a" />
              <stop offset="1" stopColor="#fb9a4c" />
            </linearGradient>
          </defs>
          <path d="M13.500 1.500h-6c-2 0-3 1-3.600 3L.6 13.500c-.8 2.300.6 3.500 2.500 3.500h3.400c1.900 0 2.800-1 3.400-3L12.500 5.500c.6-1.900 1.300-2.400 3-2.400h1.800c-.5-1-1.400-1.600-3.800-1.600z" fill="url(#c1)" />
          <path d="M10.500 22.500h6c2 0 3-1 3.600-3l3.300-9c.8-2.300-.6-3.500-2.500-3.500h-3.400c-1.900 0-2.800 1-3.400 3L11.500 18.500c-.6 1.900-1.300 2.400-3 2.400H6.700c.5 1 1.400 1.600 3.800 1.600z" fill="url(#c2)" />
          <path d="M13.500 1.500c2.700 0 3.500.8 4 2.500l.9 3h-.9c-1.900 0-2.800 1-3.400 3l-2.500-1z" fill="#2448d0" />
          <path d="M10.500 22.500c-2.700 0-3.500-.8-4-2.500l-.9-3h.9c1.900 0 2.800-1 3.400-3l1 4z" fill="#ee5a35" />
        </App24>
        <App24>
          <path d="M0 2.500A1.500 1.500 0 0 1 1.500 1H9l2.500 2.500H22A2 2 0 0 1 24 5.500V9H0z" fill="#dc9a12" />
          <rect y="4.500" width="24" height="18" rx="1.500" fill="#fbcb45" />
          <path d="M4 22.500V18a2 2 0 0 1 2-2h12a2 2 0 0 1 2 2v4.500z" fill="#1578cf" />
          <path d="M7.500 19h9" stroke="#0c4f94" strokeWidth="1.400" />
        </App24>
        <App24>
          <circle cx="12" cy="12" r="12" fill="#eb0029" />
          <path d="M5.500 9l3-1.500L18 8l.8 4.500-1.300 4.500H9l-3.500-3.500z" fill="#fff" />
          <path d="M8.700 7.500v4.500M11.800 7.300V12M14.800 7.300V12M5.500 12.500h6l1.500 2.500-3 .3" fill="none" stroke="#eb0029" strokeWidth=".8" />
        </App24>
        <App24>
          <rect width="24" height="24" fill="#151515" />
          <path d="M2 3h20l-2 3H4z" fill="#19c95e" />
          <path d="M4.500 7.500h15L12 21z" fill="#1fe56c" />
          <path d="M6 10.500h5l-2 3h2.500l-1 2M12.500 17l1-6h5" fill="none" stroke="#151515" strokeWidth="1.200" />
        </App24>
        <App24>
          <defs><Grad id="st" from="#101c40" to="#1788bb" /></defs>
          <circle cx="12" cy="12" r="11.500" fill="url(#st)" />
          <path d="M.7 13.500l6.500 2.600 3.800-1.800 3.500-4.500 3.500 3.500-5 3.200c-.3 3-2.500 4.300-4.700 3.800-1.700-.3-2.500-1.500-3-2.800L1.300 15.500z" fill="#fff" />
          <circle cx="15.500" cy="9.300" r="4.300" fill="#fff" />
          <circle cx="15.500" cy="9.300" r="2.700" fill="#fff" stroke="#16264d" strokeWidth="1.100" />
          <circle cx="8.700" cy="17" r="2" fill="none" stroke="#1a5585" strokeWidth=".9" />
        </App24>
        <App24>
          <circle cx="12" cy="12" r="12" fill="#5865f2" />
          <path d="M8.500 6.500c2.300-.6 4.700-.6 7 0 1.500 0 3 1 3.500 3 .6 2 .9 4.200.6 6.200-1.100.9-2.300 1.400-3.600 1.700l-1-1.500c-2 .6-4 .6-6 0l-1 1.500c-1.300-.3-2.500-.8-3.600-1.700-.3-2 0-4.200.6-6.200.5-2 2-3 3.500-3z" fill="#fff" />
          <circle cx="9.300" cy="12.300" r="1.600" fill="#5865f2" />
          <circle cx="14.700" cy="12.300" r="1.600" fill="#5865f2" />
          <circle cx="21" cy="2.800" r="7" fill="#ef5b5f" />
          <circle cx="21" cy="2.800" r="3.200" fill="#fff" />
        </App24>
        <App24>
          <path d="M16 8h6.500a1.500 1.500 0 0 1 1.500 1.500V15a4.500 4.500 0 0 1-8 3z" fill="#5059c9" />
          <circle cx="13" cy="5" r="3.500" fill="#7b83eb" />
          <path d="M7 8h10.500A1.500 1.500 0 0 1 19 9.500v6.200a6.300 6.300 0 0 1-12 2.500z" fill="#7b83eb" />
          <rect y="5.500" width="13.500" height="13" rx="1.200" fill="#4b53bc" />
          <path d="M3.500 9h6.500M6.750 9v6.500" stroke="#fff" strokeWidth="1.700" />
          <circle cx="21" cy="2.800" r="8" fill="#13a10e" />
          <path d="M17.500 2.800l2.500 2.500L24.500.8" fill="none" stroke="#fff" strokeWidth="1.700" />
        </App24>
        <App24>
          <path d="M17 .3L24 3v18l-7 2.700L6 14.500 2.500 17.500.3 16 5 12 .3 8l2.200-1.500L6 9.500z" fill="#1284ca" />
          <path d="M17 .3L24 3v18l-7 2.700z" fill="#24a5ee" />
          <path d="M17.500 7v10L11 12z" fill="#eee9ee" />
        </App24>
        <App24>
          <circle cx="12.500" cy="12.500" r="10" fill="#0b2b38" stroke="#a07c3a" strokeWidth="1.600" />
          <path d="M3.500 2H11l-1.500 3v13.500h7l2-3 2 .5L17 22.500H3.500L6 19.500V5z" fill="#c9a24e" stroke="#2c2412" strokeWidth=".7" />
        </App24>
        <App24>
          <path d="M9.500.5h5l.8 3.600 2.200 1.200 3.400-1.200 2.600 4.300L20.700 11v2.200l2.800 2.500-2.600 4.300-3.400-1.200-2.200 1.200-.8 3.600h-5L8.700 20l-2.200-1.200L3.100 20 .5 15.700l2.800-2.500V11L.5 8.400l2.600-4.300 3.400 1.200 2.200-1.200z" fill="#7b8187" stroke="#7b8187" strokeWidth="1" strokeLinejoin="round" />
          <circle cx="12" cy="12" r="6.300" fill="#f1f1f3" />
          <circle cx="12" cy="12" r="4.200" fill="#1766bd" />
        </App24>
      </div>
      <div className="ml-[333px] flex flex-1 items-center text-[11.5px] text-[#1b1b1b]">
        <Line className="h-[10px] w-[10px]" box={10} sw={1.4}>
          <path d="M.7 7.300L5 3l4.300 4.300" />
        </Line>
        <span className="ml-[21px] w-[23px] tracking-[-0.140px]">ENG</span>
        <Line className="ml-[19px] h-[17px] w-[17px]" box={17} sw={1.100}>
          <path d="M10.500 1.200H2A1.200 1.200 0 0 0 .8 2.400V11A1.200 1.200 0 0 0 2 12.200h10.500M5 12.200v3.300M9.500 12.200v3.300M3.500 15.500h8" />
          <rect x="12.300" y="1" width="4" height="4.600" rx="1" />
          <path d="M14.300 5.800v9.700M12.300 3h4" />
        </Line>
        <Line className="ml-[6px] h-4 w-[17px]" box={16} sw={1.100}>
          <path d="M.6 5.800h2.600L7 2.500v11l-3.800-3.300H.6zM9.300 5.500c1 1.500 1 3.500 0 5M11.500 3.800c1.900 2.500 1.900 6 0 8.400M13.500 2c2.900 3.500 2.900 8.500 0 12" />
        </Line>
        <div className="ml-[15px] w-[57px] text-right leading-4">
          <div>8:11 PM</div>
          <div className="tracking-[0.170px]">9/30/2024</div>
        </div>
        <Line className="ml-[8px] h-[15px] w-[15px]" box={15} sw={1.100}>
          <path d="M8 1.500C4.800.8 2.500 3 2.500 6v3L1 12h12.500l-1-2V9M5.500 12.300a2 2 0 0 0 4 0M10.500 1h3.300l-3.300 3.500h3.300M6.500 5.500h2.800L6.500 8.700h2.800" />
        </Line>
      </div>
    </footer>
  );
}

export default function App() {
  return (
    <div className="flex h-[1080px] w-[1920px] flex-col overflow-hidden whitespace-nowrap font-['Open_Sans','Noto_Sans',sans-serif]">
      <div className="flex h-[1032px] shrink-0">
        <Browser />
        <Settings />
      </div>
      <Taskbar />
    </div>
  );
}
